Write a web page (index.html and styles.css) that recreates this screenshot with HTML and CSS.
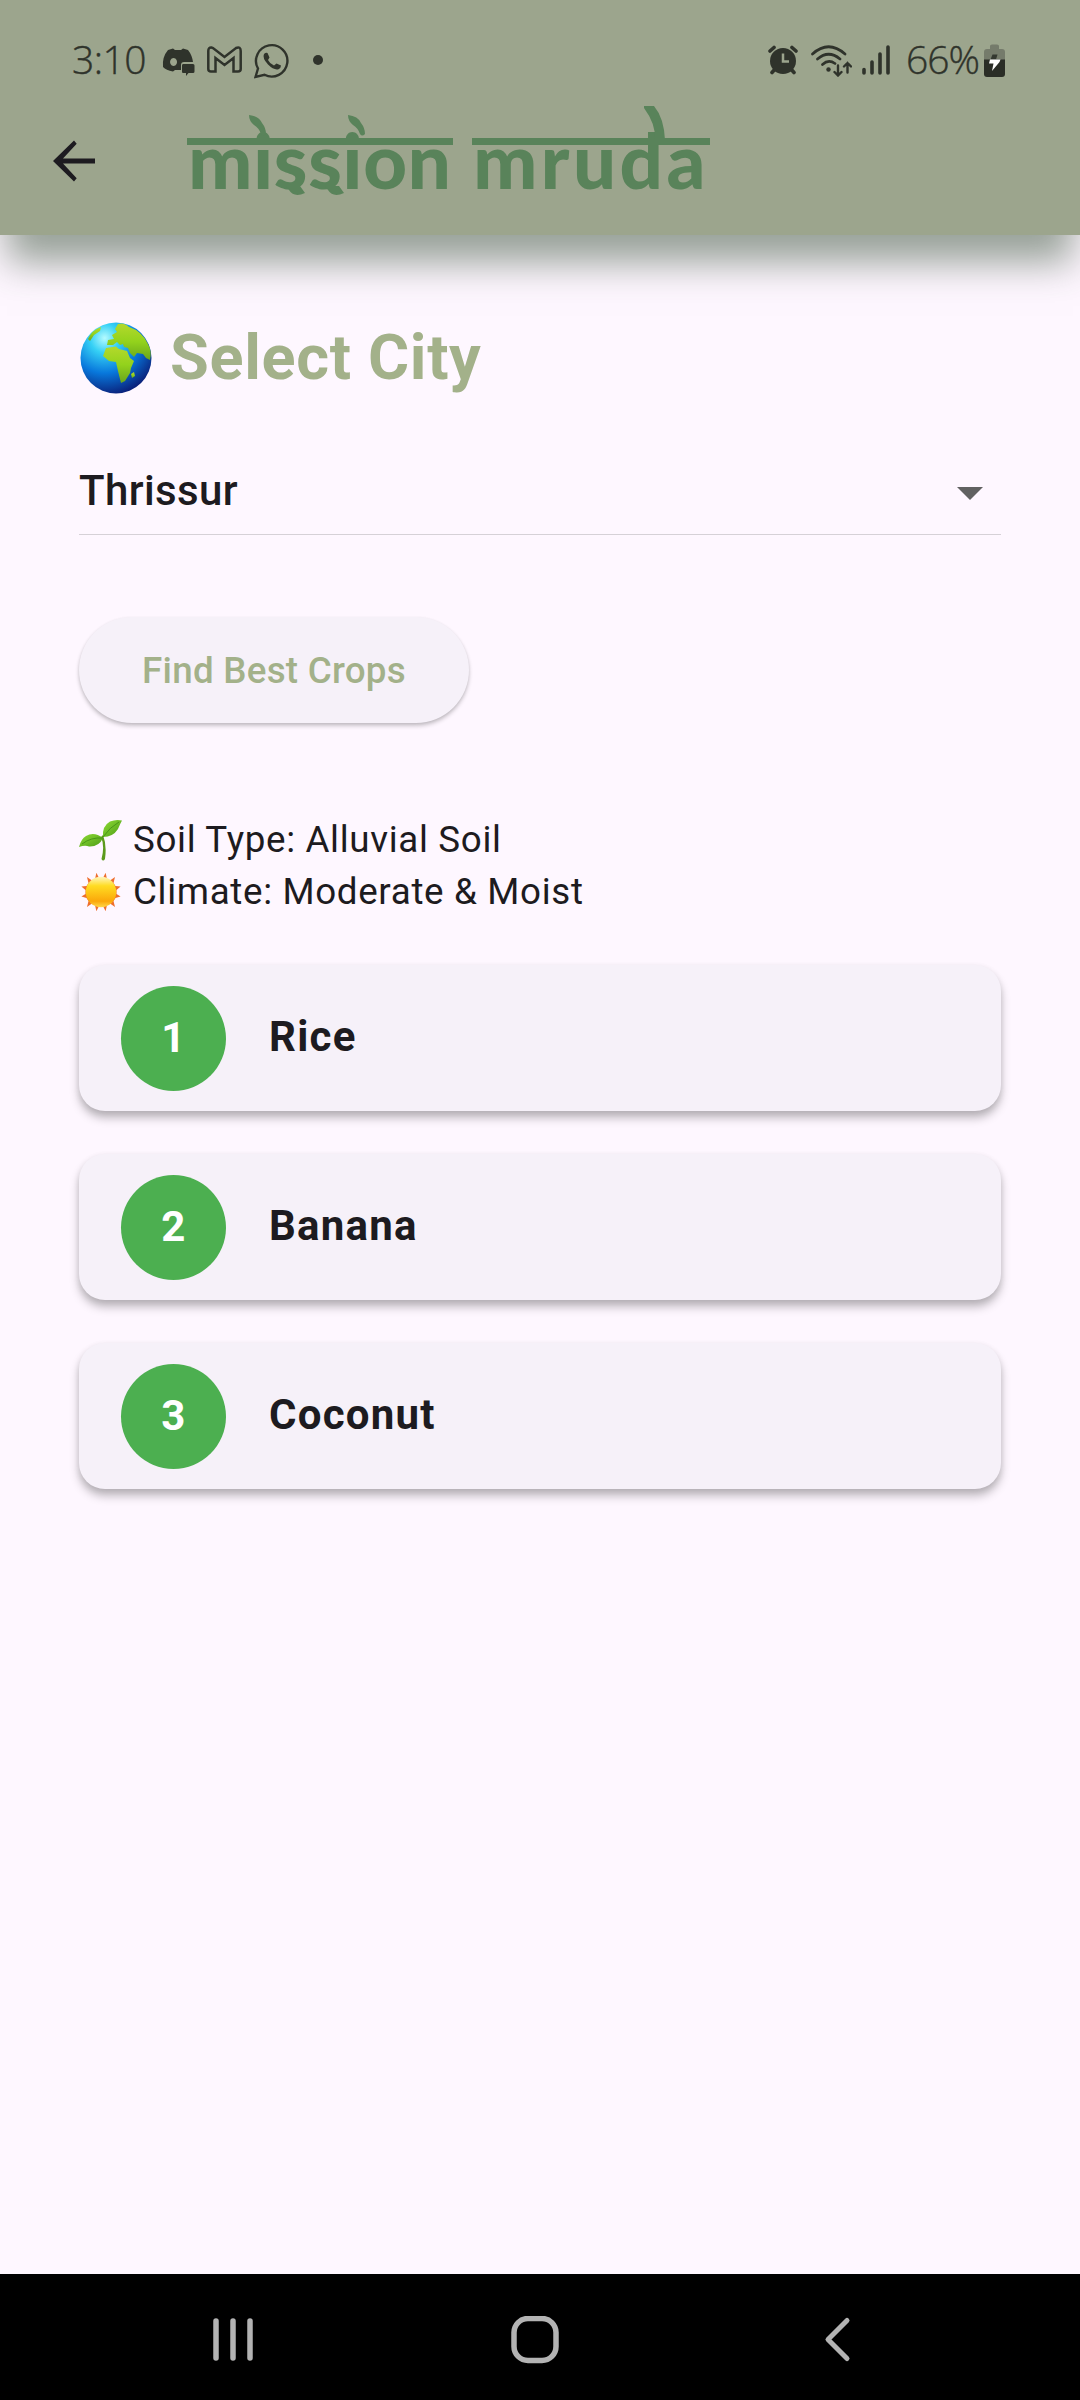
FILE: index.html
```html
<!DOCTYPE html>
<html lang="en">
<head>
<meta charset="utf-8">
<title>Mission Mruda</title>
<link rel="stylesheet" href="styles.css">
</head>
<body>
<div class="screen">
  <header class="header">
    <div class="status">
      <span class="clock">3:10</span>
      <svg class="ic-discord" width="33" height="28" viewBox="0 0 33 28">
        <path fill-rule="evenodd" d="M6 2 L11 0.500 L13 2 H19 L21 0.500 L26 2 Q30 7 31 14 H22 Q19 14 19 17 V22 H13 L11 23.500 Q4 22 1 19 Q0 9 6 2Z M11.500 10 a3.500 4 0 1 0 0.100 0Z" fill="#2f332b"/>
        <path d="M21 16 H31 Q32.500 16 32.500 17.500 V23.500 Q32.500 25 31 25 H26.500 L24 28 V25 H21 Q20 25 20 23.500 V17.500 Q20 16 21 16Z" fill="#2f332b"/>
      </svg>
      <svg class="ic-gmail" width="35" height="27" viewBox="0 0 35 27">
        <path d="M1.300 23 V5 Q1.300 1.200 4.500 1.500 L6 2 L17.500 11 L29 2 Q33.700 0 33.700 5 V23 Q33.700 25.500 31 25.500 H26.500 V12 L17.500 19 L8.500 12 V25.500 H4 Q1.300 25.500 1.300 23Z" fill="none" stroke="#2f332b" stroke-width="2.500"/>
      </svg>
      <svg class="ic-whatsapp" width="36" height="36" viewBox="0 0 36 36">
        <path d="M1.500 34 L4 25.500 A15.700 15.700 0 1 1 10.500 31.800Z" fill="none" stroke="#2f332b" stroke-width="2.400"/>
        <path d="M10 11 Q12 9 13.500 10 L15.500 14.500 L14 17 Q16 21 20 22.500 L22.500 20.500 L27 22.500 Q27 25 24.500 26.200 Q20 27.500 14 21.500 Q8 15 10 11Z" fill="#2f332b"/>
      </svg>
      <span class="dot"></span>
      <svg class="ic-alarm" width="30" height="30" viewBox="0 0 30 30">
        <g stroke="#2f332b" stroke-width="3.600" stroke-linecap="round"><path d="M2 6 L6 2.500 M28 6 L24 2.500 M4 27.500 L8 23 M26 27.500 L22 23"/></g>
        <circle cx="15" cy="16" r="13" fill="#2f332b"/>
        <path d="M15 8.500 V16.500 H21" fill="none" stroke="#9ca58d" stroke-width="2.500"/>
      </svg>
      <svg class="ic-wifi" width="41" height="32" viewBox="0 0 41 32">
        <g fill="none" stroke="#2f332b" stroke-width="2.700" stroke-linecap="round"><path d="M1.500 9 Q17.500 -5.500 34 9 M6.500 14 Q17.500 4.500 29 14 M11.500 19.500 Q17.500 14 24 18.500"/><path stroke-width="2.400" d="M27 20.500 V30 M23.500 27 L27 30.500 L30.500 27 M36.500 27.500 V18 M33 21.500 L36.500 18 L40 21.500"/></g>
        <circle cx="17.500" cy="24.500" r="2.200" fill="#2f332b"/>
      </svg>
      <svg class="ic-signal" width="28" height="30" viewBox="0 0 28 30">
        <path d="M2 24.500 V28 M10 17 V28 M18 9 V28 M26 2 V28" fill="none" stroke="#2f332b" stroke-width="3.600" stroke-linecap="round"/>
      </svg>
      <span class="percent">66%</span>
      <svg class="ic-battery" width="21" height="33" viewBox="0 0 21 33">
        <path d="M6 5 V2 Q6 0.500 8 0.500 H13 Q15 0.500 15 2 V5 H18 Q21 5 21 8 V16 H0 V8 Q0 5 3 5Z" fill="#757b6b"/>
        <path d="M0 15.500 H21 V30 Q21 33 18 33 H3 Q0 33 0 30Z" fill="#2a2d26"/>
        <path d="M8.500 10.500 H13.500 L12 15.500 H6.500Z" fill="#343830"/>
        <path d="M6 15.500 H16.500 L15.500 18 L8 27 L9.500 19.500 H5Z" fill="#fff"/>
      </svg>
    </div>
    <div class="appbar">
      <svg class="back" width="42" height="42" viewBox="0 0 42 42">
        <path d="M42 18.400 H10 L23.700 3.700 L21 0.500 L0 21 L21 41.500 L23.700 38.300 L10 23.500 H42Z" fill="#1d1b20"/>
      </svg>
      <h1 class="logo">
        <span class="word first">mission
          <svg class="ornament" width="266" height="92" viewBox="0 0 266 92"><g fill="#59835a">
            <path id="petal" d="M62 1 Q72 2 75 9 Q79 14 79 20 Q76 23 74 20 Q72 14 67 11 Q62 7 62 1Z"/>
            <use href="#petal" x="99"/>
            <path id="tail" d="M99 72 H113 L118 79 Q107 84 102 76Z"/>
            <use href="#tail" x="39"/>
          </g></svg>
        </span>
        <span class="word second">mruda
          <svg class="ornament" width="238" height="92" viewBox="0 0 238 92"><path d="M172 -8 H182 Q192 4 193 26 H183 Q184 10 172 -6Z" fill="#59835a"/></svg>
        </span>
      </h1>
    </div>
  </header>
  <main class="content">
    <h2 class="title">
      <svg class="globe" width="72" height="72" viewBox="0 0 72 72">
        <defs>
          <radialGradient id="sea" cx="34%" cy="22%" r="82%"><stop offset="0" stop-color="#b5fbff"/><stop offset=".25" stop-color="#35d0f5"/><stop offset=".6" stop-color="#0878dc"/><stop offset="1" stop-color="#0a1e78"/></radialGradient>
          <linearGradient id="land" x1="0" y1="0" x2="0" y2="1"><stop offset="0" stop-color="#b4d92c"/><stop offset=".5" stop-color="#93d21c"/><stop offset="1" stop-color="#68a51c"/></linearGradient>
        </defs>
        <circle cx="36" cy="36" r="35.500" fill="url(#sea)"/>
        <g fill="url(#land)">
          <path d="M8 17 Q12 8 21 5 L20 9 L14 13 L10 19Z"/>
          <path d="M35 7 L38 2 Q44 0 49 5 Q62 9 68 22 Q72 29 70 38 L66 36 L63 32 L57 31 L54 35 L50 31 L48 26 L44 25 L43 22 L40 23 L37 20 L33 23 L27 23 L28 18 L34 17 L32 13 L37 10Z"/>
          <path d="M26 26 L36 24.500 L39 27 L47 29 L50 36 L54 39 L51 46 L50 51 L45 59 L41 61 L38 49 L36 40 L29 39 L23 34Z"/>
          <path d="M54 50 L55 54 L52 56 L51 52Z"/>
        </g>
      </svg>
      <span>Select City</span>
    </h2>
    <div class="dropdown"><span>Thrissur</span><svg class="caret" width="26" height="13" viewBox="0 0 26 13"><path d="M0 0 H26 L13 13Z" fill="#616161"/></svg></div>
    <button class="find">Find Best Crops</button>
    <div class="facts">
      <p class="fact">
        <svg class="emoji" width="44" height="42" viewBox="0 0 44 42">
          <defs><linearGradient id="leaf" x1="0" y1="0" x2="1" y2="1"><stop offset="0" stop-color="#8fdc36"/><stop offset="1" stop-color="#4c9c16"/></linearGradient></defs>
          <path d="M24 16 Q28 26 26 40 Q24 43 22.500 40 Q26 27 22 18Z" fill="#5c9a1c"/>
          <path d="M24 18 Q23 7 31 2.500 Q37 0 43 1.500 Q41 5 39 10 Q34 18 24 18Z" fill="url(#leaf)"/>
          <path d="M24 19 Q15 12 7 17 Q2 20 0 28 Q6 26 10 27.500 Q20 28 24 19Z" fill="url(#leaf)"/>
          <path d="M24 18 Q31 8 40 3 M24 19 Q12 18 3 25" stroke="#3f8c14" stroke-width=".8" fill="none"/>
        </svg>
        <span>Soil Type: Alluvial Soil</span>
      </p>
      <p class="fact">
        <svg class="emoji" width="44" height="42" viewBox="0 0 44 42">
          <defs><linearGradient id="sun" x1="0" y1="0" x2="0" y2="1"><stop offset="0" stop-color="#fff6c0"/><stop offset=".3" stop-color="#ffdc22"/><stop offset=".8" stop-color="#fba70a"/><stop offset="1" stop-color="#ffd84a"/></linearGradient></defs>
          <path fill="#ee6f2d" d="M17.400 1.700 L20 7 L24 7 L26.600 1.700 L28 8 L31 9.500 L36 6 L34.500 12 L36.500 15 L41.600 15.600 L37.500 19 L37.500 23 L41.600 25.600 L36.500 27 L34.500 30 L36 36 L31 32.500 L28 34 L26.600 40.300 L24 35 H20 L17.400 40.300 L16 34 L13 32.500 L8 36 L9.500 30 L7.500 27 L2.400 25.600 L6.500 23 V19 L2.400 15.600 L7.500 15 L9.500 12 L8 6 L13 9.500 L16 8Z"/>
          <circle cx="22" cy="21" r="15.300" fill="url(#sun)"/>
        </svg>
        <span>Climate: Moderate &amp; Moist</span>
      </p>
    </div>
    <ol class="crops">
      <li class="crop"><span class="rank">1</span><span class="name">Rice</span></li>
      <li class="crop"><span class="rank">2</span><span class="name">Banana</span></li>
      <li class="crop"><span class="rank">3</span><span class="name">Coconut</span></li>
    </ol>
  </main>
  <nav class="nav">
    <svg class="recents" width="42" height="48" viewBox="0 0 42 48"><path d="M4 5 V42 M21 5 V42 M38 5 V42" stroke="#b3b3b3" stroke-width="5.500" stroke-linecap="round"/></svg>
    <svg class="home" width="48" height="48" viewBox="0 0 48 48"><rect x="3" y="2.500" width="42" height="42" rx="14" fill="none" stroke="#b3b3b3" stroke-width="5.500"/></svg>
    <svg class="return" width="28" height="48" viewBox="0 0 28 48"><path d="M24 4.500 L5 23.500 L24 42.500" fill="none" stroke="#b3b3b3" stroke-width="5" stroke-linecap="round" stroke-linejoin="round"/></svg>
  </nav>
</div>
</body>
</html>
```
FILE: styles.css
```css
* { box-sizing: border-box; margin: 0; padding: 0; }
body { background: #fef7ff; font-family: Roboto, sans-serif; color: #1d1b20; }
.screen { width: 1080px; height: 2400px; display: flex; flex-direction: column; overflow: hidden; }
.header { height: 235px; flex: none; background: #9ca58d; box-shadow: 0 34px 36px -7px rgba(50, 75, 50, .5); }
.status { height: 88px; display: flex; align-items: flex-start; padding-left: 72px; color: #2f332b; font: 300 39px/53px "Open Sans", sans-serif; -webkit-text-stroke: .4px #2f332b; }
.clock { width: 89px; margin-top: 32px; letter-spacing: -.5px; }
.percent { width: 79px; margin: 32px 0 0 16px; letter-spacing: -1px; }
.ic-discord { margin: 48px 0 0 1px; }
.ic-gmail { margin: 46px 0 0 12px; }
.ic-whatsapp { margin: 43px 0 0 12px; }
.dot { width: 10px; height: 10px; border-radius: 50%; background: #2f332b; margin: 55px 445px 0 23px; }
.ic-alarm { margin-top: 45px; }
.ic-wifi { margin: 45px 0 0 13px; }
.ic-signal { margin: 45px 0 0 10px; }
.ic-battery { margin: 44px 0 0 -1px; }
.status > * { flex: none; }
.appbar { height: 147px; display: flex; }
.back { margin: 52px 0 0 53px; }
.logo { margin-left: 92px; display: flex; gap: 19px; color: #59835a; font: 900 76px/92px Lato, sans-serif; }
.word { position: relative; display: block; height: 92px; margin-top: 26px; white-space: nowrap; text-align: center; }
.word::before { content: ""; position: absolute; left: 0; right: 0; top: 24px; height: 7px; background: #59835a; }
.ornament { position: absolute; left: 0; top: 0; overflow: visible; }
.first { width: 266px; letter-spacing: .8px; }
.second { width: 238px; letter-spacing: 3.5px; }
.content { flex: 1; padding: 80px 79px 0; display: flex; flex-direction: column; }
.title { height: 86px; display: flex; align-items: center; gap: 18px; padding-left: 1px; color: #a3b18a; font: 700 63px/86px Roboto, sans-serif; letter-spacing: .66px; }
.dropdown { margin-top: 70px; height: 64px; display: flex; align-items: flex-start; justify-content: space-between; border-bottom: 1px solid #d6d1d7; padding-right: 18px; font-size: 42px; font-weight: 500; line-height: 40px; letter-spacing: .4px; }
.caret { margin-top: 16px; }
.find { margin-top: 82px; width: 390px; height: 106px; padding-top: 2px; border: 0; border-radius: 53px; background: #f6f1f9; color: #a3b18a; font: 500 36.75px/104px Roboto, sans-serif; letter-spacing: .26px; box-shadow: 0 3px 4px rgba(0, 0, 0, .2), 0 1px 3px rgba(0, 0, 0, .08); }
.facts { margin-top: 91px; }
.fact { height: 52px; display: flex; align-items: center; gap: 10px; font-size: 36.75px; letter-spacing: .66px; line-height: 52px; }
.crops { list-style: none; margin-top: 47px; display: flex; flex-direction: column; gap: 43px; }
.crop { height: 146px; padding-left: 42px; display: flex; align-items: center; gap: 43px; border-radius: 26px; background: #f6f1f9; box-shadow: 0 7px 10px rgba(0, 0, 0, .25), 0 2px 6px rgba(0, 0, 0, .08); font-size: 42px; font-weight: 700; letter-spacing: 1.25px; }
.name { padding-bottom: 3px; }
.rank { width: 105px; height: 105px; border-radius: 50%; background: #4caf50; color: #fff; text-align: center; line-height: 103px; letter-spacing: .4px; }
.nav { height: 126px; flex: none; background: #000; display: flex; padding: 42px 0 0 212px; }
.home { margin-left: 257px; }
.return { margin-left: 264px; }
```
